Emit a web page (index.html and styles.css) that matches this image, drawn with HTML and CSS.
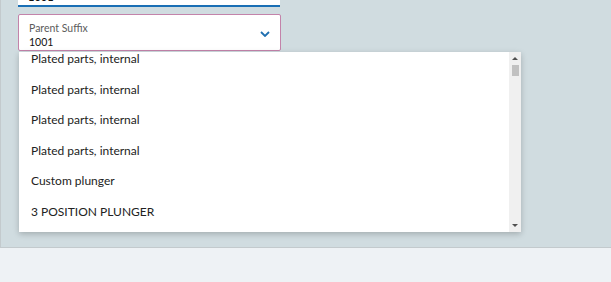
FILE: index.html
```html
<!DOCTYPE html>
<html lang="en">

<head>
    <meta charset="UTF-8">
    <title>Parent Suffix</title>
    <link rel="stylesheet" href="styles.css">
</head>

<body>
    <div class="panel">
        <div class="field-top">
            <span class="top-value">1001</span>
        </div>

        <div class="select-field">
            <div class="select-text">
                <span class="select-label">Parent Suffix</span>
                <span class="select-value">1001</span>
            </div>
            <svg class="chevron" width="10" height="6" viewBox="0 0 10 6">
                <path d="M1 1 L5 5 L9 1" fill="none" stroke="#1f6fb0" stroke-width="1.8" />
            </svg>
        </div>

        <div class="dropdown">
            <ul class="options">
                <li>Plated parts, internal</li>
                <li>Plated parts, internal</li>
                <li>Plated parts, internal</li>
                <li>Plated parts, internal</li>
                <li>Custom plunger</li>
                <li>3 POSITION PLUNGER</li>
            </ul>
            <div class="scrollbar">
                <span class="arrow-up"></span>
                <span class="thumb"></span>
                <span class="spacer"></span>
                <span class="arrow-down"></span>
            </div>
        </div>
    </div>
    <div class="footer"></div>
</body>

</html>
```

FILE: styles.css
```css
body {
    margin: 0;
    padding: 0;
    font-family: Lato, "Open Sans", sans-serif;
    background-color: #eef2f5;
    overflow: hidden;
}

.panel {
    background-color: #d0dce0;
    border-left: 1px solid #c3cacd;
    border-bottom: 1px solid #c3cacd;
    box-sizing: border-box;
    height: 248px;
    padding-left: 17px;
    position: relative;
}

.field-top {
    width: 262px;
    height: 7px;
    background-color: #fff;
    border-bottom: 2px solid #1a6fb5;
    box-sizing: border-box;
    overflow: hidden;
    padding-left: 10px;
}

.top-value {
    display: block;
    font-size: 11px;
    font-weight: bold;
    color: #111;
    margin-top: -9px;
    line-height: 12px;
}

.select-field {
    margin-top: 7px;
    width: 263px;
    height: 37px;
    background-color: #fff;
    border: 1px solid #c383aa;
    border-radius: 2px;
    box-sizing: border-box;
    display: flex;
    align-items: center;
    justify-content: space-between;
    padding: 0 10px 0 10px;
}

.select-text {
    display: flex;
    flex-direction: column;
}

.select-label {
    font-size: 10.5px;
    color: #5c5c5c;
    line-height: 13px;
    margin-top: 5px;
}

.select-value {
    font-size: 10.5px;
    color: #111;
    line-height: 13px;
    margin-top: 1px;
}

.chevron {
    margin-top: 2px;
}

.dropdown {
    position: absolute;
    top: 52px;
    left: 18px;
    width: 502px;
    height: 180px;
    background-color: #fff;
    box-shadow: 0 2px 6px rgba(0, 0, 0, 0.22);
    display: flex;
    overflow: hidden;
}

.options {
    flex: 1;
    list-style: none;
    margin: -8px 0 0 0;
    padding: 0;
}

.options li {
    height: 30.6px;
    line-height: 30.6px;
    padding-left: 12px;
    font-size: 12px;
    color: #222;
    white-space: nowrap;
}

.scrollbar {
    width: 12px;
    background-color: #f0f0f0;
    display: flex;
    flex-direction: column;
    align-items: center;
}

.arrow-up {
    width: 0;
    height: 0;
    margin-top: 5px;
    border-left: 3px solid transparent;
    border-right: 3px solid transparent;
    border-bottom: 3px solid #505050;
}

.thumb {
    width: 7px;
    height: 11px;
    margin-top: 5px;
    background-color: #c1c1c1;
}

.spacer {
    flex: 1;
}

.arrow-down {
    width: 0;
    height: 0;
    margin-bottom: 5px;
    border-left: 3px solid transparent;
    border-right: 3px solid transparent;
    border-top: 3px solid #505050;
}

.footer {
    height: 34px;
}
```
